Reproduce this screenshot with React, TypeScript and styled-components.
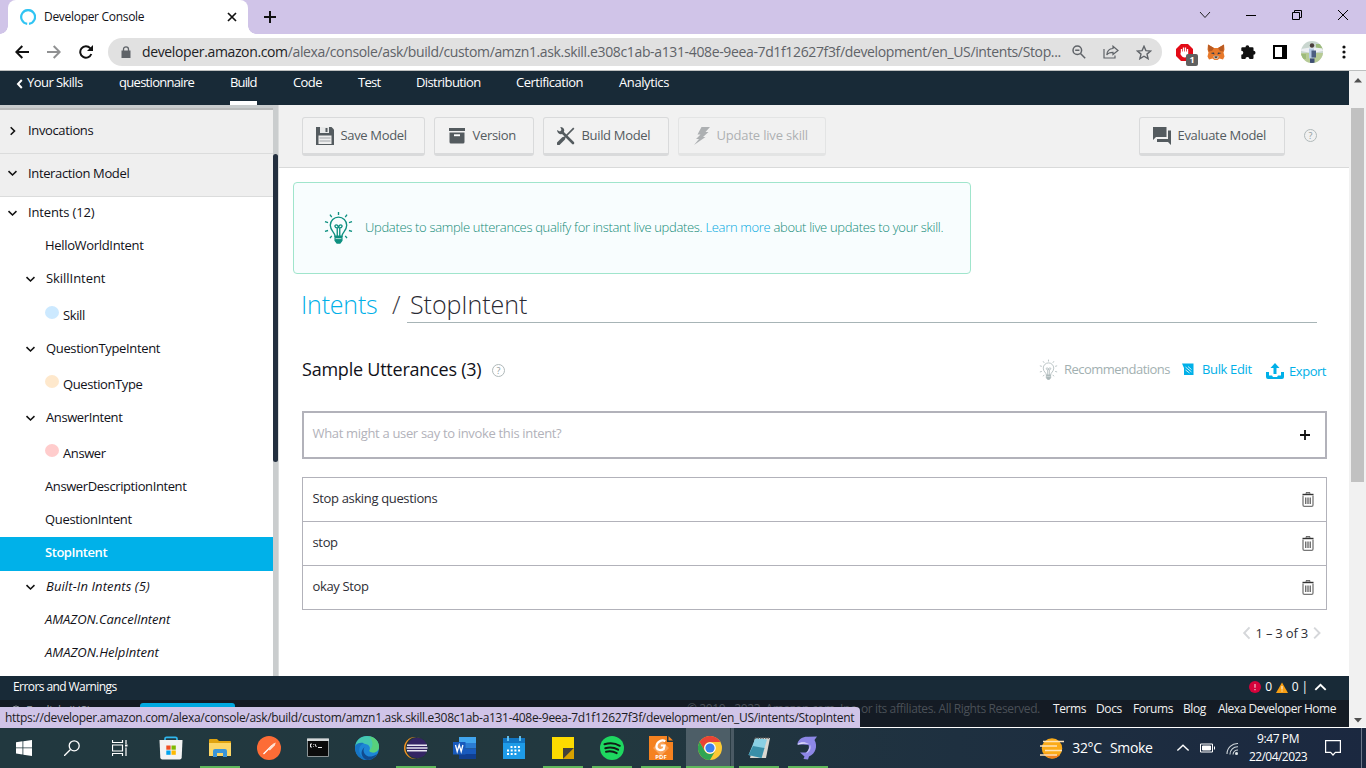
import React from 'react';
import styled, { createGlobalStyle, css } from 'styled-components';

const GlobalStyle = createGlobalStyle`
  * { box-sizing: border-box; }
  html, body { margin: 0; padding: 0; overflow: hidden; background: #fff; }
  body { font-family: 'Open Sans', 'Noto Sans', sans-serif; font-size: 13px; color: #111118; }
  svg { display: block; flex: none; }
`;

const Screen = styled.div`
  width: 1366px;
  height: 768px;
  display: flex;
  flex-direction: column;
  position: relative;
  overflow: hidden;
`;

/* Every run of text: one line, with its own tracking, size, colour and weight. */
const Text = styled.span<{ $ls?: number; $size?: number; $color?: string; $weight?: number; $w?: number; $italic?: boolean }>`
  display: block;
  flex: none;
  white-space: nowrap;
  line-height: 1.3;
  letter-spacing: ${(p) => p.$ls ?? -0.4}px;
  ${(p) => p.$size && css`font-size: ${p.$size}px;`}
  ${(p) => p.$color && css`color: ${p.$color};`}
  ${(p) => p.$weight && css`font-weight: ${p.$weight};`}
  ${(p) => p.$w && css`width: ${p.$w}px;`}
  ${(p) => p.$italic && css`font-style: italic;`}
`;

/* ---------- browser chrome ---------- */

const TabStrip = styled.div`
  height: 34px;
  background: #d0c4e8;
  display: flex;
  justify-content: space-between;
`;

const TabGroup = styled.div`
  display: flex;
`;

/* The small curves where the tab meets the toolbar. */
const TabFoot = styled.i<{ $side: 'left' | 'right' }>`
  width: 8px;
  height: 8px;
  align-self: flex-end;
  background: radial-gradient(circle at ${(p) => (p.$side === 'left' ? '0 0' : '100% 0')}, transparent 7.5px, #fff 8px);
`;

const Tab = styled.div`
  width: 240px;
  height: 34px;
  background: #fff;
  border-radius: 8px 8px 0 0;
  display: flex;
  align-items: center;
  padding: 0 10px 0 12px;
  gap: 8px;
`;

const TabTitle = styled(Text)`
  flex: 1;
`;

const NewTab = styled.div`
  width: 28px;
  display: flex;
  align-items: center;
  justify-content: center;
`;

const WindowButtons = styled.div`
  display: flex;
  height: 29px;
`;

const WindowButton = styled.div`
  width: 46px;
  display: flex;
  align-items: center;
  justify-content: center;
`;

const AddressRow = styled.div`
  height: 37px;
  display: flex;
  align-items: center;
  background: #fff;
  border-bottom: 1px solid #bdbfbf;
`;

const NavIcons = styled.div`
  width: 108px;
  display: flex;
  align-items: center;
  gap: 18px;
  padding-left: 15px;
`;

const AddressPill = styled.div`
  width: 1054px;
  height: 28px;
  border-radius: 14px;
  background: #e1e1e1;
  display: flex;
  align-items: center;
  padding: 0 10px 0 13px;
`;

const Url = styled(Text)`
  margin-left: 11px;
  width: 921px;
  b { font-weight: 400; color: #202124; }
`;

const PillIcons = styled.div`
  margin-left: auto;
  display: flex;
  align-items: center;
  gap: 17px;
`;

const Extensions = styled.div`
  display: flex;
  align-items: center;
  padding-left: 12px;
`;

const ExtIcon = styled.div<{ $w: number }>`
  width: ${(p) => p.$w}px;
  display: flex;
  justify-content: center;
  position: relative;
`;

const Badge = styled.span`
  position: absolute;
  left: 12px;
  top: 10px;
  width: 12px;
  height: 12px;
  border-radius: 2px;
  background: #5f6060;
  color: #fff;
  font-size: 9px;
  font-weight: 700;
  line-height: 12px;
  text-align: center;
`;

/* ---------- page ---------- */

const PageRow = styled.div`
  height: 657px;
  display: flex;
`;

const Page = styled.div`
  width: 1349px;
  display: flex;
  flex-direction: column;
  background: #fff;
`;

const PageScroll = styled.div`
  width: 17px;
  background: #f1f1f1;
  display: flex;
  flex-direction: column;
  align-items: center;
  justify-content: space-between;
  padding: 7px 0 5px;
`;

const PageThumb = styled.div`
  width: 13px;
  height: 374px;
  background: #c1c1c1;
  margin-top: 25px;
  margin-bottom: auto;
`;

const TopNav = styled.nav`
  height: 34px;
  background: #182a37;
  display: flex;
  gap: 36px;
  padding-left: 15px;
`;

const NavItem = styled.div<{ $active?: boolean; $w: number }>`
  width: ${(p) => p.$w}px;
  height: 34px;
  display: flex;
  gap: 2px;
  padding-top: 3px;
  color: #fff;
  border-bottom: 4px solid ${(p) => (p.$active ? '#fff' : 'transparent')};
  svg { margin-top: 5px; }
`;

const Body = styled.div`
  height: 571px;
  display: flex;
`;

const Sidebar = styled.aside`
  width: 273px;
  border-top: 3px solid #c8cccd;
  box-shadow: inset 0 2px 0 #b9bbbb;
  padding-top: 2px;
`;

const Section = styled.div<{ $h: number; $lift: number }>`
  height: ${(p) => p.$h}px;
  background: #efefef;
  border-bottom: 1px solid #dbdcdc;
  display: flex;
  align-items: center;
  padding: 0 0 ${(p) => p.$lift}px 7px;
  gap: 11px;
`;

const TreeRow = styled.div<{ $indent: number; $h?: number; $active?: boolean; $lift?: number }>`
  height: ${(p) => p.$h ?? 33}px;
  display: flex;
  align-items: center;
  gap: 11px;
  padding-left: ${(p) => p.$indent}px;
  padding-bottom: ${(p) => p.$lift ?? 1}px;
  svg { margin-top: 1px; }
  ${(p) => p.$active && css`background: #00b1e9; color: #fff; font-weight: 600;`}
`;

const SlotRow = styled.div`
  height: 36px;
  display: flex;
  align-items: flex-start;
  gap: 4px;
  padding-left: 45px;
`;

const SlotDot = styled.i<{ $color: string }>`
  width: 14px;
  height: 13px;
  margin-top: 10px;
  border-radius: 50%;
  background: ${(p) => p.$color};
`;

const SlotName = styled(Text)`
  margin-top: 11px;
`;

const SideScroll = styled.div`
  width: 6px;
  background: #cacdce;
  border-right: 1px solid #dcdede;
  padding-top: 49px;
`;

const SideThumb = styled.div`
  width: 5px;
  height: 308px;
  border-radius: 3px;
  background: #232f3f;
`;

const Main = styled.main`
  width: 1070px;
`;

const Toolbar = styled.div`
  height: 63px;
  background: #f1f1f1;
  border-bottom: 1px solid #d9dada;
  display: flex;
  align-items: flex-start;
  gap: 9px;
  padding: 12px 32px 0 23px;
`;

const ToolButton = styled.button<{ $w: number; $disabled?: boolean; $push?: boolean }>`
  width: ${(p) => p.$w}px;
  height: 39px;
  flex: none;
  border: 1px solid #d9dadb;
  border-bottom: 3px solid #d9dadb;
  border-radius: 3px;
  background: #f2f2f2;
  color: #545b5f;
  font: inherit;
  display: flex;
  align-items: center;
  padding: 0 0 0 13px;
  gap: 6.5px;
  ${(p) => p.$disabled && css`opacity: .55;`}
  ${(p) => p.$push && css`margin-left: auto;`}
`;

const HelpMark = styled.span`
  display: block;
  width: 13px;
  height: 13px;
  flex: none;
  border: 1px solid #b0b9ba;
  border-radius: 50%;
  color: #8f9a9c;
  font-size: 9px;
  line-height: 11px;
  text-align: center;
`;

const ToolbarHelp = styled.div`
  padding: 12px 0 0 10px;
`;

const Notice = styled.div`
  width: 678px;
  height: 92px;
  margin: 14px 0 0 14px;
  border: 1px solid #a0e5cc;
  border-radius: 4px;
  background: #f8fdfe;
  display: flex;
  align-items: center;
  padding: 0 0 2px 30px;
  gap: 12px;
  color: #128b78;
`;

const NoticeText = styled(Text)`
  a { color: #00a8e0; }
`;

const TitleRow = styled.div`
  display: flex;
  height: 49px;
  padding-left: 22px;
`;

const TitleText = styled(Text)`
  margin-top: 14px;
  line-height: 32px;
`;

const TitleInput = styled.div`
  width: 910px;
  border-bottom: 1px solid #a7b4b6;
  padding-left: 3px;
`;

const SubHeader = styled.div`
  display: flex;
  align-items: center;
  height: 94px;
  padding: 0 22px 0 23px;
`;

const SubActions = styled.div`
  margin-left: auto;
  display: flex;
  align-items: center;
  color: #00b0e8;
`;

const ActionLink = styled.div<{ $gap: number; $ml?: number; $drop?: number }>`
  display: flex;
  align-items: center;
  gap: ${(p) => p.$gap}px;
  margin-left: ${(p) => p.$ml ?? 0}px;
  padding: ${(p) => (p.$drop ? `${p.$drop}px 0 0` : '0 0 2px')};
`;

const UtteranceInput = styled.div`
  width: 1025px;
  height: 48px;
  margin: -6px 0 18px 23px;
  border: 2px solid #b2b2ba;
  display: flex;
  align-items: center;
  justify-content: space-between;
  padding: 0 15px 3px 8.5px;
  svg { margin-top: 3px; }
`;

const UtteranceList = styled.div`
  width: 1025px;
  margin-left: 23px;
  border: 1px solid #b2b2ba;
`;

const UtteranceRow = styled.div`
  height: 44px;
  display: flex;
  align-items: center;
  justify-content: space-between;
  padding: 0 12px 2px 9.5px;
  color: #2e2e36;
  svg { margin-top: 2px; }
  & + & { border-top: 1px solid #b2b2ba; }
  &:first-child { height: 43px; }
`;

const Pager = styled.div`
  display: flex;
  align-items: center;
  justify-content: flex-end;
  gap: 1px;
  padding: 15px 26px 0 0;
`;

const ErrorsBar = styled.div`
  height: 24px;
  background: #182a37;
  color: #fff;
  display: flex;
  align-items: center;
  justify-content: space-between;
  padding: 0 22px 2px 13px;
`;

const Counters = styled.div`
  display: flex;
  align-items: center;
  gap: 4px;
  svg:last-child { margin-left: 2px; }
`;

const SiteFooter = styled.footer`
  height: 27px;
  background: #141b24;
  display: flex;
  align-items: flex-start;
  color: #f2f2f2;
`;

const LanguagePick = styled.div`
  display: flex;
  flex: none;
  gap: 5px;
  width: 140px;
  padding: 3px 0 0 11px;
  color: #8d9298;
`;

const LanguageButton = styled.div`
  width: 95px;
  height: 22px;
  flex: none;
  margin-top: 3px;
  border-radius: 3px;
  background: #00a8df;
`;

const Copyright = styled(Text)`
  margin: 1px 0 0 452px;
`;

const FooterLinks = styled.div`
  display: flex;
  gap: 12px;
  padding: 1px 0 0 14px;
`;

const StatusBubble = styled.div`
  position: absolute;
  left: 0;
  top: 707px;
  width: 860px;
  height: 21px;
  background: #d0c4e8;
  border-radius: 0 4px 0 0;
  padding: 3px 0 0 5px;
  color: #1b1b22;
`;

/* ---------- taskbar ---------- */

const Taskbar = styled.div`
  height: 41px;
  margin-top: -1px;
  border-top: 1px solid #fff;
  background: linear-gradient(90deg, #21383f 0%, #22383f 45%, #1e3040 70%, #1b2840 100%);
  display: flex;
  color: #fff;
`;

const SystemButton = styled.div<{ $w?: number }>`
  width: ${(p) => p.$w ?? 48}px;
  display: flex;
  align-items: center;
  justify-content: center;
`;

const AppGroup = styled.div`
  display: flex;
  padding-left: 2px;
`;

const AppButton = styled.div<{ $running?: boolean; $active?: boolean }>`
  width: 49px;
  height: 40px;
  display: flex;
  align-items: center;
  justify-content: center;
  ${(p) => p.$running && css`background: linear-gradient(#5fb85c, #5fb85c) 5px 38px / 40px 2px no-repeat;`}
  ${(p) => p.$active && css`
    background: linear-gradient(#5fb85c, #5fb85c) 1px 38px / 48px 2px no-repeat,
      linear-gradient(90deg, #4d5e67 44px, #2b3d45 44px, #2b3d45 45px, #4a5a64 45px) 1px 0 / 48px 40px no-repeat;
  `}
`;

const Tray = styled.div`
  margin-left: auto;
  display: flex;
  align-items: center;
  width: 326px;
`;

const Wifi = styled.svg`
  margin-left: 2px;
`;

const Clock = styled.div`
  width: 74px;
  display: flex;
  flex-direction: column;
  align-items: center;
  gap: 2px;
  margin: 0 10px 0 3px;
`;

const ShowDesktop = styled.div`
  width: 5px;
  height: 40px;
  margin-left: auto;
  border-left: 1px solid #6d7789;
`;

/* ---------- icons ---------- */

const Chevron = ({ dir, color = '#111', size = 10, sw = 1.6 }: { dir: 'left' | 'right' | 'down' | 'up'; color?: string; size?: number; sw?: number }) => {
  const d = {
    left: 'M6.8 1 3 5l3.8 4',
    right: 'M3.7 1.2 7.500 5 3.700 8.800',
    down: 'M1.500 3.200 5.500 7l4-3.800',
    up: 'M1 6.8 5 3l4 3.8',
  }[dir];
  return (
    <svg width={size} height={size} viewBox="0 0 10 10" fill="none" stroke={color} strokeWidth={sw}>
      <path d={d} />
    </svg>
  );
};

const Bulb = ({ color, width, height, detail }: { color: string; width: number; height: number; detail: number }) => (
  <svg width={width} height={height} viewBox="0 0 30 34" fill="none" stroke={color} strokeWidth={detail}>
    <path d="M15 1v3M6.2 3.6l1.8 2.6M23.8 3.6 22 6.2M1 11l3.2.9M29 11l-3.2.9M1 21l3.2-.9M29 21l-3.2-.9M6.2 28l1.8-2.3M23.8 28 22 25.7" />
    <path d="M11.5 26c0-4-5-5.5-5-11.2a8.5 8.5 0 0 1 17 0c0 5.7-5 7.2-5 11.2z" />
    <path d="M13.7 26v-8.5c-3 0-3-3.2-1-3.2s2 2 2.3 3.200c.3-1.200.3-3.200 2.300-3.200s2 3.200-1 3.200V26" />
    <path d="M11.5 26.5h7v4L16.5 33h-3l-2-2.500z" fill={color} />
    <path d="M12 28.500h6" stroke="#fff" strokeWidth=".7" />
  </svg>
);

const Trash = () => (
  <svg width="12" height="15" viewBox="0 0 12 15" fill="none" stroke="#333" strokeWidth="1">
    <path d="M.5 2.500h11" strokeWidth="1.400" />
    <path d="M4 1.500V.8h4v.7" />
    <path d="M1 3.500v9.500q0 1.300 1.300 1.300h7.400q1.300 0 1.300-1.300V3.500" stroke="#777" strokeWidth="1.300" />
    <path d="M3.800 5.500v6.500M6 5.500v6.500M8.200 5.500v6.500" />
  </svg>
);

const AlexaMark = () => (
  <svg width="16" height="16" viewBox="0 0 16 16" fill="none" stroke="#31c4f3" strokeWidth="2.200">
    <path d="M7.200 14.800A6.900 6.900 0 1 1 9 14.800" />
  </svg>
);

const Metamask = () => (
  <svg width="18" height="16" viewBox="0 0 18 16">
    <path d="M1 .5 7 4h4l6-3.500.5 5-1 3 1 4-1.500 3-3.500-1-2 1.500h-3L5.500 14.500 2 15.500.5 12.500l1-4-1-3z" fill="#e8792a" />
    <path d="M1 .5 7 4 5 7 1.500 7.500zM17 .5 11 4l2 3 3.500.5z" fill="#b85a22" />
    <path d="m3.500 9 3.500-.5.500 2zM14.500 9 11 8.500l-.5 2z" fill="#2b3b50" />
    <path d="m6 12.500 1.500-.7h3l1.500.7-1.500 2.500h-3z" fill="#cdb9a8" />
    <path d="M7.500 12.500h3l-.6 1.200H8z" fill="#222" />
  </svg>
);

const Avatar = () => (
  <svg width="22" height="22" viewBox="0 0 22 22">
    <defs><clipPath id="face"><circle cx="11" cy="11" r="11" /></clipPath></defs>
    <g clipPath="url(#face)">
      <path fill="#c9d6cf" d="M0 0h22v22H0z" />
      <path fill="#b7cb95" d="M0 12h22v10H0z" />
      <path fill="#9dbb7b" d="M15 3h7v6h-7zM0 13h5v5H0z" />
      <path fill="#eef0f4" d="M0 8 9 6.500h5l8 1v2.500l-8 1.500H8L0 10z" />
      <path fill="#b6cbe6" d="M8 7.500h5v10H8z" />
      <path fill="#4c5d80" d="M10.500 9.500h4.500v7h-4.500z" />
      <path fill="#3f4f74" d="M9 17.500h4.500v4.500H9z" />
      <circle cx="11" cy="4.500" r="2.200" fill="#4a3d3c" />
    </g>
  </svg>
);

const appIcons: { name: string; running?: boolean; active?: boolean; art: React.ReactNode }[] = [
  { name: 'Store', art: <>
    <path d="M6 6V2.800Q6 1.300 7.500 1.300h9Q18 1.300 18 2.800V6" fill="none" stroke="#2fb7ee" strokeWidth="1.700" />
    <path d="M.5 4h23l-.8 17.500q-.1 2-2 2H3.300q-1.900 0-2-2z" fill="#f3f3f3" />
    <path d="M7.300 9.500h4.300v4.200H7.300z" fill="#f04f23" /><path d="M12.500 9.500h4.300v4.200h-4.300z" fill="#7fb900" />
    <path d="M7.300 14.500h4.300v4.300H7.300z" fill="#01a3ee" /><path d="M12.500 14.500h4.300v4.300h-4.300z" fill="#fdb900" /></> },
  { name: 'Explorer', running: true, art: <>
    <path d="M1 4q0-1 1-1h7l2 2h11q1 0 1 1v14H1z" fill="#e0a30f" />
    <path d="M1 7h22v13H1z" fill="#fcd667" />
    <path d="M5 21v-6q0-2 2-2h10q2 0 2 2v6h-4v-4H9v4z" fill="#3a95d8" /></> },
  { name: 'Postman', art: <>
    <circle cx="12" cy="12" r="12" fill="#fd6c36" />
    <path d="M6.500 18 15 9.500" stroke="#fff" strokeWidth="1.200" />
    <path d="m11 13 5-5.200 2.800-1.300-1 3-5 5z" fill="#ffe1d3" /></> },
  { name: 'Terminal', art: <>
    <path d="M1.500 3h21v17.500h-21z" fill="#0b0b0b" stroke="#8c9496" /><path d="M1 2.500h22V5H1z" fill="#d5d9da" />
    <path d="M6 8h-1.500v3H6M7.500 8v.6M7.500 10.400v.6M9 8l1.300 3M12 11.500h4" stroke="#eee" strokeWidth="1" fill="none" /></> },
  { name: 'Edge', art: <>
    <circle cx="12" cy="12" r="12" fill="#1d86d6" />
    <path d="M.3 10C1 4 6 0 12 0c7 0 12 5 12 10.500 0 4-3 6-6 6-2 0-4-.8-3.500-2.200.8-2 .8-5.300-4-6.300C6 7 1.500 8 .3 10z" fill="#45c9b0" />
    <path d="M14 .2c6 .8 10 5.300 10 10.300 0 4-3 6-6 6-2 0-4-.8-3.500-2.200C18 12 19 5 14 .2z" fill="#5fd36b" opacity=".75" />
    <path d="M.3 10C2 6.800 6 6.300 9 7.300c-4 1-5.500 5-4.500 9 1 3.700 4 6.700 7.500 7.700C4.500 24-.7 17.500.3 10z" fill="#1674c4" />
    <path d="M9.500 11c-3 5 1.500 10.500 7 9.500 2-.4 4-1.500 5.500-2.500-2.500 5-7.500 6-10 6-5-1.500-8-8-2.500-13z" fill="#114b8f" /></> },
  { name: 'Eclipse', running: true, art: <>
    <circle cx="11" cy="12" r="11" fill="#f7941e" /><circle cx="12.500" cy="12" r="11" fill="#23363d" /><circle cx="13.300" cy="12" r="10.200" fill="#342564" />
    <path d="M3 9.200h20M2.500 12h21M3 14.800h20" stroke="#e9e7f2" strokeWidth="1.500" /></> },
  { name: 'Word', art: <>
    <path d="M6 1h17v6H6z" fill="#41a5ee" /><path d="M6 7h17v5.500H6z" fill="#2b7cd3" />
    <path d="M6 12.500h17V18H6z" fill="#185abd" /><path d="M6 18h17v5H6z" fill="#103f91" />
    <path d="M0 6h12.500v12.500H0z" fill="#185abd" />
    <path d="m2.500 9 1.700 6.500L6.200 9l2 6.500L9.900 9" stroke="#fff" strokeWidth="1.300" fill="none" /></> },
  { name: 'Calendar', art: <>
    <path d="M1 2h22v21H1z" fill="#1e9be8" /><path d="M1 2h22v5H1z" fill="#1175c2" />
    <path d="M6 0v5M18 0v5" stroke="#6ccbf7" strokeWidth="1.800" />
    <path d="M8.500 11h10M5 14.500h13.500M5 18h10" stroke="#fff" strokeWidth="2" strokeDasharray="2 1.700" /></> },
  { name: 'Notes', running: true, art: <>
    <path d="M1 1h22v11L12 23H1z" fill="#fddb00" /><path d="M12 12h11L12 23z" fill="#43413b" /><path d="M23 12v11H12z" fill="#d8a100" /></> },
  { name: 'Spotify', running: true, art: <>
    <circle cx="12" cy="12" r="12" fill="#1ed760" />
    <path d="M4.500 8.300c5-1.500 11-1 15.300 1.500M5.300 12.200c4.300-1.200 9-.7 12.800 1.500M6 15.700c3.700-.9 7.500-.4 10.700 1.400" stroke="#101c16" strokeWidth="2" fill="none" strokeLinecap="round" /></> },
  { name: 'PDF reader', running: true, art: <>
    <path d="M0 0h18v6h6v18H0z" fill="#f58220" /><path d="M19.500 0 24 4.500h-4.500z" fill="#f58220" />
    <path d="M4 12 12 4l8 8-8 8z" fill="#f9a35a" />
    <path d="M16.300 5.200c-3.500-2-8.300.3-8.800 4.800-.4 4 4.500 5 7.200 3l.8-3.500h-3.700" stroke="#fff" strokeWidth="2.200" fill="none" />
    <text x="12" y="22.500" fontSize="6" fontWeight="700" textAnchor="middle" fill="#fff">PDF</text></> },
  { name: 'Chrome', active: true, art: <>
    <circle cx="12" cy="12" r="12" fill="#fcc934" />
    <path d="M1.600 6A12 12 0 0 1 22.400 6H12a6 6 0 0 0-5.200 9z" fill="#ea4335" />
    <path d="M1.600 6A12 12 0 0 0 12 24l5.200-9A6 6 0 0 1 6.800 15z" fill="#30a552" />
    <circle cx="12" cy="12" r="5.800" fill="#fff" /><circle cx="12" cy="12" r="4.600" fill="#3b80ee" /></> },
  { name: 'Notepad', running: true, art: <>
    <path d="M8 2h15l-1 5-3 15H3z" fill="#d9d7d0" /><path d="M8.500 2 20 3.500 14.500 22 1.500 19z" fill="#8ad0e4" />
    <path d="M6 10 17.500 12 14.500 22 1.500 19z" fill="#3a8fa8" /><path d="M8 2h14" stroke="#555" strokeWidth="1.400" strokeDasharray="1.500 1" /></> },
  { name: 'Dolphin', running: true, art: <>
    <path d="M1.500 7.500C2.500 3 7 .5 12 .8l9-.3-2.500 3.500c3.500 6 1 14-5.500 16.500l-1 3-4.500-.5 1-2.500-4.500-4h5.500c3-1 4-4.500 3-7.500-3.500-1-7-.5-11-.5z" fill="#8d87e6" />
    <path d="M1.500 8C4.500 6 8.500 5.500 13 8c-4-.5-7-.3-11 .8z" fill="#dcd9fa" />
    <path d="M14 8.500c1.500 3.500.5 7-4 9 2-3 3.500-5 4-9z" fill="#c3bff5" /></> },
];

const sidebarSections: { label: string; dir: 'right' | 'down'; h: number; lift: number }[] = [
  { label: 'Invocations', dir: 'right', h: 44, lift: 2 },
  { label: 'Interaction Model', dir: 'down', h: 43, lift: 4 },
];

const utterances = ['Stop asking questions', 'stop', 'okay Stop'];

const Slot = ({ name, color }: { name: string; color: string }) => (
  <SlotRow>
    <SlotDot $color={color} />
    <SlotName>{name}</SlotName>
  </SlotRow>
);

const Parent = ({ name, italic, h, ls = -0.35, lift }: { name: string; italic?: boolean; h?: number; ls?: number; lift?: number }) => (
  <TreeRow $indent={25} $h={h} $lift={lift}>
    <Chevron dir="down" />
    <Text $italic={italic} $ls={ls}>{name}</Text>
  </TreeRow>
);

export default function App() {
  return (
    <Screen>
      <GlobalStyle />

      <TabStrip>
        <TabGroup>
          <TabFoot $side="left" />
          <Tab>
            <AlexaMark />
            <TabTitle $size={12} $ls={-0.3}>Developer Console</TabTitle>
            <svg width="12" height="12" viewBox="0 0 12 12" stroke="#111" strokeWidth="1.700"><path d="m2 2 8 8M10 2l-8 8" /></svg>
          </Tab>
          <TabFoot $side="right" />
          <NewTab>
            <svg width="12" height="12" viewBox="0 0 12 12" stroke="#111" strokeWidth="2"><path d="M6 0v12M0 6h12" /></svg>
          </NewTab>
        </TabGroup>
        <WindowButtons>
          <WindowButton><svg width="12" height="10" viewBox="0 0 12 10" fill="none" stroke="#222"><path d="m1 2 5 5.500L11 2" /></svg></WindowButton>
          <WindowButton><svg width="10" height="10" viewBox="0 0 10 10" stroke="#000"><path d="M0 5.500h10" /></svg></WindowButton>
          <WindowButton><svg width="10" height="10" viewBox="0 0 10 10" fill="none" stroke="#000"><path d="M.5 2.500h7v7h-7zM2.500 2.500v-2h7v7h-2" /></svg></WindowButton>
          <WindowButton><svg width="10" height="10" viewBox="0 0 10 10" stroke="#000"><path d="m0 0 10 10M10 0 0 10" /></svg></WindowButton>
        </WindowButtons>
      </TabStrip>

      <AddressRow>
        <NavIcons>
          <svg width="14" height="14" viewBox="0 0 14 14" fill="none" stroke="#111" strokeWidth="2"><path d="M14 7H1.500M7.300 1 1.300 7l6 6" /></svg>
          <svg width="14" height="14" viewBox="0 0 14 14" fill="none" stroke="#909192" strokeWidth="2"><path d="M0 7h12.500M6.700 1l6 6-6 6" /></svg>
          <svg width="14" height="14" viewBox="0 0 14 14" fill="none" stroke="#111" strokeWidth="2"><path d="M12.300 9A5.700 5.700 0 1 1 11.200 3.200l1.300 1.300" /><path d="M14 0v6H8z" fill="#111" stroke="none" /></svg>
        </NavIcons>
        <AddressPill>
          <svg width="10" height="13" viewBox="0 0 10 13"><path d="M.5 4.500h9V12h-9z" fill="#5f6368" /><path d="M2.500 5V3.300a2.500 2.500 0 0 1 5 0V5" fill="none" stroke="#5f6368" strokeWidth="1.300" /></svg>
          <Url $size={14} $ls={-0.36} $color="#5f6368">
            <b>developer.amazon.com</b>/alexa/console/ask/build/custom/amzn1.ask.skill.e308c1ab-a131-408e-9eea-7d1f12627f3f/development/en_US/intents/Stop...
          </Url>
          <PillIcons>
            <svg width="14" height="14" viewBox="0 0 14 14" fill="none" stroke="#5f6368" strokeWidth="1.500"><circle cx="5.300" cy="5.300" r="4.300" /><path d="m8.500 8.500 4.700 4.700M3.200 5.300h4.200" /></svg>
            <svg width="16" height="14" viewBox="0 0 16 14" fill="none" stroke="#5f6368" strokeWidth="1.200"><path d="M1 4v9h11v-2.500" /><path d="M10 1.200 15 5.500l-5 4V7.300C7 7.300 5 8 3.800 10 4 6 6.500 3.700 10 3.500z" /></svg>
            <svg width="16" height="15" viewBox="0 0 16 15" fill="none" stroke="#5f6368" strokeWidth="1.400"><path d="m8 1.300 1.900 4.300 4.700.4-3.600 3.100 1.100 4.600L8 11.200l-4.100 2.500L5 9.100 1.400 6l4.700-.4z" /></svg>
          </PillIcons>
        </AddressPill>
        <Extensions>
          <ExtIcon $w={20}>
            <svg width="17" height="17" viewBox="0 0 17 17"><path d="M5 0h7l5 5v7l-5 5H5l-5-5V5z" fill="#e30b17" /><path d="M5.500 8V5M7.500 8V3.500M9.500 8V3.500M11.500 8V5" stroke="#fff" strokeWidth="1.300" /><path d="M4.900 7.500h7.300v3q-1 3-3.500 3t-4.300-3.500z" fill="#fff" /></svg>
            <Badge>1</Badge>
          </ExtIcon>
          <ExtIcon $w={44}><Metamask /></ExtIcon>
          <ExtIcon $w={20}><svg width="15" height="14" viewBox="0 0 15 14"><path d="M4.500 2.200a1.900 1.900 0 0 1 3.800 0h3.200q1 0 1 1v2.600a2 2 0 0 1 0 4v3.200q0 1-1 1H8.400a2 2 0 0 0-4 0H1.200q-.9 0-.9-1V9.800a2 2 0 0 0 0-4V3.200q0-1 1-1z" fill="#111" /></svg></ExtIcon>
          <ExtIcon $w={44}><svg width="14" height="14" viewBox="0 0 14 14"><path d="M0 0h14v14H0z" fill="#000" /><path d="M2 2h7v10H2z" fill="#fff" /></svg></ExtIcon>
          <ExtIcon $w={20}><Avatar /></ExtIcon>
          <ExtIcon $w={44}><svg width="4" height="14" viewBox="0 0 4 14" fill="#111"><circle cx="2" cy="2" r="1.600" /><circle cx="2" cy="7" r="1.600" /><circle cx="2" cy="12" r="1.600" /></svg></ExtIcon>
        </Extensions>
      </AddressRow>

      <PageRow>
        <Page>
          <TopNav>
            <NavItem $w={68}><Chevron dir="left" color="#fff" size={10} sw={2} /><Text $ls={-0.55}>Your Skills</Text></NavItem>
            <NavItem $w={75}><Text $ls={-0.7}>questionnaire</Text></NavItem>
            <NavItem $w={27} $active><Text $ls={-0.85}>Build</Text></NavItem>
            <NavItem $w={29}><Text $ls={-0.6}>Code</Text></NavItem>
            <NavItem $w={22}><Text $ls={-0.7}>Test</Text></NavItem>
            <NavItem $w={64}><Text $ls={-0.6}>Distribution</Text></NavItem>
            <NavItem $w={67}><Text $ls={-0.5}>Certification</Text></NavItem>
            <NavItem $w={50}><Text>Analytics</Text></NavItem>
          </TopNav>

          <Body>
            <Sidebar>
              {sidebarSections.map((s) => (
                <Section key={s.label} $h={s.h} $lift={s.lift}>
                  <Chevron dir={s.dir} />
                  <Text $ls={-0.36}>{s.label}</Text>
                </Section>
              ))}
              <TreeRow $indent={7} $h={32} $lift={2}><Chevron dir="down" /><Text $ls={-0.15}>Intents (12)</Text></TreeRow>
              <TreeRow $indent={45}><Text $ls={-0.33}>HelloWorldIntent</Text></TreeRow>
              <Parent name="SkillIntent" h={34} ls={-0.05} lift={2} />
              <Slot name="Skill" color="#cce9ff" />
              <Parent name="QuestionTypeIntent" />
              <Slot name="QuestionType" color="#fee8cc" />
              <Parent name="AnswerIntent" ls={-0.4} />
              <Slot name="Answer" color="#ffcccc" />
              <TreeRow $indent={45}><Text>AnswerDescriptionIntent</Text></TreeRow>
              <TreeRow $indent={45} $h={34}><Text $ls={-0.33}>QuestionIntent</Text></TreeRow>
              <TreeRow $indent={45} $h={34} $active $lift={3}><Text $ls={-0.45}>StopIntent</Text></TreeRow>
              <Parent name="Built-In Intents (5)" italic h={32} ls={0.1} lift={2} />
              <TreeRow $indent={45}><Text $italic $ls={-0.03}>AMAZON.CancelIntent</Text></TreeRow>
              <TreeRow $indent={45}><Text $italic $ls={0}>AMAZON.HelpIntent</Text></TreeRow>
            </Sidebar>
            <SideScroll><SideThumb /></SideScroll>

            <Main>
              <Toolbar>
                <ToolButton $w={123}>
                  <svg width="18" height="18" viewBox="0 0 18 18"><path d="M0 0h15.500L18 2.500V18H0z" fill="#545b5f" /><path d="M4 0h9v6H4z" fill="#e8e9e9" /><path d="M9.500 1h2v4h-2z" fill="#545b5f" /><path d="M2.500 8.500h13V17h-13z" fill="#eee" /><path d="M3.500 11h11M3.500 14h11" stroke="#b9bcbe" strokeWidth="1.500" /></svg>
                  <Text $ls={-0.33}>Save Model</Text>
                </ToolButton>
                <ToolButton $w={100}>
                  <svg width="18" height="16" viewBox="0 0 18 16"><path d="M1 0h16v3H1zM1.500 4.500h15V14q0 1.500-1.500 1.500H3Q1.500 15.500 1.500 14z" fill="#545b5f" /><path d="M6 6.300h6v1.900H6z" fill="#fff" /></svg>
                  <Text $ls={-0.3}>Version</Text>
                </ToolButton>
                <ToolButton $w={126}>
                  <svg width="18" height="18" viewBox="0 0 18 18"><path d="M1.500 16.500 6.500 11.500" stroke="#545b5f" strokeWidth="3.500" strokeLinecap="round" /><path d="M7 11 16.800 1.200" stroke="#545b5f" strokeWidth="1.700" /><path d="m5 5 11 11" stroke="#545b5f" strokeWidth="2.600" strokeLinecap="round" /><path d="M0 3l3 1.500L4.500 3 3.300 0Q7 .2 7.300 3.500L6 7 3.500 7.200Q.3 6.500 0 3z" fill="#545b5f" /></svg>
                  <Text $ls={-0.33}>Build Model</Text>
                </ToolButton>
                <ToolButton $w={148} $disabled>
                  <svg width="18" height="18" viewBox="0 0 18 18"><path d="M9.500 0H18l-4.500 5h3L11 10h2.500L2 18l5-6H4l4.500-4.500h-3z" fill="#777c80" /></svg>
                  <Text $ls={-0.18} $color="#777c80">Update live skill</Text>
                </ToolButton>
                <ToolButton $w={146} $push>
                  <svg width="18" height="18" viewBox="0 0 18 18" fill="#545b5f"><path d="M0 0h13.500v10H3l-3 3zM15 3.500h3V18l-3-3H4v-3h11z" /></svg>
                  <Text $ls={-0.3}>Evaluate Model</Text>
                </ToolButton>
                <ToolbarHelp><HelpMark>?</HelpMark></ToolbarHelp>
              </Toolbar>

              <Notice>
                <Bulb color="#0e9080" width={29} height={33} detail={1.4} />
                <NoticeText $ls={-0.32} $weight={300}>
                  Updates to sample utterances qualify for instant live updates. <a>Learn more</a> about live updates to your skill.
                </NoticeText>
              </Notice>

              <TitleRow>
                <TitleText $size={25} $weight={300} $ls={-0.2} $w={91} $color="#00b0e8">Intents</TitleText>
                <TitleText $size={25} $weight={300} $ls={0} $w={15} $color="#3c3c44">/</TitleText>
                <TitleInput><TitleText $size={25} $weight={300} $ls={-0.05} $color="#2a2a33">StopIntent</TitleText></TitleInput>
              </TitleRow>

              <SubHeader>
                <Text $size={18} $ls={-0.23} $w={190}>Sample Utterances (3)</Text>
                <HelpMark>?</HelpMark>
                <SubActions>
                  <ActionLink $gap={6}><Bulb color="#aab7b8" width={19} height={21} detail={1.3} /><Text $w={107} $ls={-0.52} $color="#a2b0b1">Recommendations</Text></ActionLink>
                  <ActionLink $gap={8} $ml={11}>
                    <svg width="12" height="12" viewBox="0 0 12 12"><path d="M0 .5h11.500V12H2V5z" fill="#00b0e8" /><path d="m3.500 4 6 5M6 3.500l3.500 3M3.500 7l4 3" stroke="#c6edfa" strokeWidth="1" /></svg>
                    <Text $w={52} $weight={500} $ls={-0.35}>Bulk Edit</Text>
                  </ActionLink>
                  <ActionLink $gap={5} $ml={12} $drop={3}>
                    <svg width="18" height="16" viewBox="0 0 18 16" fill="#00b0e8"><path d="M9 0 4.500 5h3v6h3V5h3zM0 9h3v3.500h3L7 14h4l1-1.500h3V9h3v5q0 2-2 2H2q-2 0-2-2z" /></svg>
                    <Text $w={38} $weight={500} $ls={-0.45}>Export</Text>
                  </ActionLink>
                </SubActions>
              </SubHeader>

              <UtteranceInput>
                <Text $color="#b2b2ba" $ls={-0.33}>What might a user say to invoke this intent?</Text>
                <svg width="10" height="10" viewBox="0 0 10 10" stroke="#111" strokeWidth="1.800"><path d="M5 0v10M0 5h10" /></svg>
              </UtteranceInput>

              <UtteranceList>
                {utterances.map((u) => (
                  <UtteranceRow key={u}><Text $ls={-0.35}>{u}</Text><Trash /></UtteranceRow>
                ))}
              </UtteranceList>

              <Pager>
                <Chevron dir="left" color="#d5d7da" size={14} sw={1.4} />
                <Text $ls={-0.2} $color="#2e2e36">1 – 3 of 3</Text>
                <Chevron dir="right" color="#d5d7da" size={14} sw={1.4} />
              </Pager>
            </Main>
          </Body>

          <ErrorsBar>
            <Text $size={12} $ls={-0.58}>Errors and Warnings</Text>
            <Counters>
              <svg width="12" height="12" viewBox="0 0 12 12"><circle cx="6" cy="6" r="6" fill="#d6033b" /><path d="M6 3v3.700M6 8v1.300" stroke="#f6c4d0" strokeWidth="1.200" /></svg>
              <Text $size={12}>0</Text>
              <svg width="12" height="11" viewBox="0 0 12 11"><path d="m6 .5 6 10.500H0z" fill="#f79f14" /><path d="M6 4v3.500M6 8.500v1" stroke="#fff" /></svg>
              <Text $size={12} $ls={-0.1}>0 |</Text>
              <Chevron dir="up" color="#fff" size={13} sw={1.5} />
            </Counters>
          </ErrorsBar>
          <SiteFooter>
            <LanguagePick>
              <svg width="10" height="10" viewBox="0 0 10 10" fill="none" stroke="#8d9298"><circle cx="5" cy="7" r="4" /></svg>
              <Text $size={12} $ls={-0.05}>English (US)</Text>
            </LanguagePick>
            <LanguageButton />
            <Copyright $size={12} $ls={-0.38} $w={352} $color="#4a5057">© 2010 - 2023, Amazon.com, Inc. or its affiliates. All Rights Reserved.</Copyright>
            <FooterLinks>
              <Text $w={31} $size={12}>Terms</Text>
              <Text $w={25} $size={12}>Docs</Text>
              <Text $w={38} $size={12}>Forums</Text>
              <Text $w={23} $size={12}>Blog</Text>
              <Text $w={118} $size={12} $ls={-0.5}>Alexa Developer Home</Text>
            </FooterLinks>
          </SiteFooter>
        </Page>

        <PageScroll>
          <svg width="8" height="5" viewBox="0 0 8 5"><path d="M0 4.500 4 0l4 4.500z" fill="#505050" /></svg>
          <PageThumb />
          <svg width="8" height="5" viewBox="0 0 8 5"><path d="M0 0h8L4 4.500z" fill="#505050" /></svg>
        </PageScroll>
      </PageRow>

      <StatusBubble>
        <Text $size={12} $ls={-0.307}>
          https://developer.amazon.com/alexa/console/ask/build/custom/amzn1.ask.skill.e308c1ab-a131-408e-9eea-7d1f12627f3f/development/en_US/intents/StopIntent
        </Text>
      </StatusBubble>

      <Taskbar>
        <SystemButton><svg width="16" height="16" viewBox="0 0 16 16" fill="#fff"><path d="M0 2.200 6.500 1.300v6.200H0zM7.300 1.200 16 0v7.500H7.300zM0 8.300h6.500v6.200L0 13.600zM7.300 8.300H16V16l-8.700-1.200z" /></svg></SystemButton>
        <SystemButton><svg width="16" height="16" viewBox="0 0 16 16" fill="none" stroke="#fff" strokeWidth="1.300"><circle cx="10.200" cy="5.800" r="5" /><path d="M6.500 9.500 0 16" /></svg></SystemButton>
        <SystemButton><svg width="16" height="16" viewBox="0 0 16 16" fill="none" stroke="#fff" strokeWidth="1.200"><path d="M.5 0v2.500h10V0M.5 5h10v6H.5zM.5 16v-2.500h10V16M14 0v4M14 7.500V16" /><path d="M13 4.500h2.500v2H13z" fill="#fff" stroke="none" /></svg></SystemButton>
        <AppGroup>
          {appIcons.map((a) => (
            <AppButton key={a.name} $running={a.running} $active={a.active}>
              <svg width="24" height="24" viewBox="0 0 24 24">{a.art}</svg>
            </AppButton>
          ))}
        </AppGroup>
        <Tray>
          <svg width="24" height="21" viewBox="0 0 24 21"><circle cx="12" cy="10.500" r="10.200" fill="#fbab18" /><path d="M4 15.500A10 10 0 0 0 20 17z" fill="#f07d1a" /><path d="M3 3.500h21M0 8h17M5 12.500h17M0 17h17" stroke="#ffe3b8" strokeWidth="1.600" /></svg>
          <SystemButton $w={46}><Text $size={14} $ls={-0.3}>32°C</Text></SystemButton>
          <Text $size={14} $ls={-0.35} $w={66}>Smoke</Text>
          <Chevron dir="up" color="#fff" size={14} sw={1} />
          <svg width="34" height="10" viewBox="0 0 34 10" fill="none" stroke="#fff"><path d="M10.500 1h12v8h-12zM24.500 3.500v3" /><path d="M12.500 3h8v4h-8z" fill="#fff" /></svg>
          <Wifi width="12" height="13" viewBox="0 0 12 13" fill="none" stroke="#cfd6da" strokeWidth="1.100"><path d="M1 12A10.500 10.500 0 0 1 12 1.500M4 12.500A7.500 7.500 0 0 1 12 4.800M7 12.500A5 5 0 0 1 12 8" /><circle cx="10.500" cy="11.500" r="1" fill="#fff" /></Wifi>
          <Clock>
            <Text $size={12} $ls={-0.4}>9:47 PM</Text>
            <Text $size={12} $ls={-0.55}>22/04/2023</Text>
          </Clock>
          <svg width="16" height="16" viewBox="0 0 16 16" fill="none" stroke="#fff" strokeWidth="1.200"><path d="M.6.600h14.800v11.800h-5L8 15l-2.400-2.600h-5z" /></svg>
          <ShowDesktop />
        </Tray>
      </Taskbar>
    </Screen>
  );
}
